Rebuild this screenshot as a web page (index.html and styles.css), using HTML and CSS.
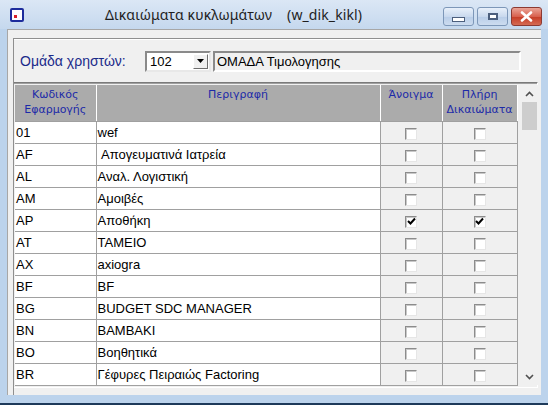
FILE: index.html
```html
<!DOCTYPE html>
<html lang="el">
<head>
    <meta charset="UTF-8">
    <title>Δικαιώματα κυκλωμάτων</title>
    <link rel="stylesheet" href="styles.css">
</head>
<body>
    <div class="window">
        <div class="titlebar">
            <span class="app-icon"><span class="dot"></span></span>
            <span class="title">Δικαιώματα κυκλωμάτων&nbsp;&nbsp;&nbsp;&nbsp;(w_dik_kikl)</span>
            <div class="caption-buttons">
                <span class="cap-btn"><span class="min-glyph"></span></span>
                <span class="cap-btn"><span class="max-glyph"></span></span>
                <span class="cap-btn close">
                    <svg width="13" height="11" viewBox="0 0 13 11"><path d="M2 1.5 L11 9.5 M11 1.5 L2 9.5" stroke="#fff" stroke-width="2.6" stroke-linecap="round"/></svg>
                </span>
            </div>
        </div>

        <div class="client">
            <div class="panel">
                <div class="filter">
                    <span class="label">Ομάδα χρηστών:</span>
                    <div class="combo">
                        <span class="combo-text">102</span>
                        <span class="combo-btn">
                            <svg width="7" height="4" viewBox="0 0 7 4"><path d="M0 0 H7 L3.5 4 Z" fill="#000"/></svg>
                        </span>
                    </div>
                    <div class="textbox">ΟΜΑΔΑ Τιμολογησης</div>
                </div>

                <div class="grid">
                    <table class="rows">
                        <colgroup>
                            <col class="c-code">
                            <col class="c-desc">
                            <col class="c-open">
                            <col class="c-full">
                        </colgroup>
                        <thead>
                            <tr>
                                <th>Κωδικός<br>Εφαρμογής</th>
                                <th>Περιγραφή</th>
                                <th>Άνοιγμα</th>
                                <th>Πλήρη<br>Δικαιώματα</th>
                            </tr>
                        </thead>
                        <tbody>
                            <tr><td>01</td><td>wef</td><td class="chk"><span class="box"></span></td><td class="chk"><span class="box"></span></td></tr>
                            <tr><td>AF</td><td>&nbsp;Απογευματινά Ιατρεία</td><td class="chk"><span class="box"></span></td><td class="chk"><span class="box"></span></td></tr>
                            <tr><td>AL</td><td>Αναλ. Λογιστική</td><td class="chk"><span class="box"></span></td><td class="chk"><span class="box"></span></td></tr>
                            <tr><td>AM</td><td>Αμοιβές</td><td class="chk"><span class="box"></span></td><td class="chk"><span class="box"></span></td></tr>
                            <tr><td>AP</td><td>Αποθήκη</td>
                                <td class="chk"><span class="box"><svg width="9" height="9" viewBox="0 0 9 9"><path d="M1 4 L3.5 6.5 L8 1.5" fill="none" stroke="#000" stroke-width="2"/></svg></span></td>
                                <td class="chk"><span class="box"><svg width="9" height="9" viewBox="0 0 9 9"><path d="M1 4 L3.5 6.5 L8 1.5" fill="none" stroke="#000" stroke-width="2"/></svg></span></td></tr>
                            <tr><td>AT</td><td>ΤΑΜΕΙΟ</td><td class="chk"><span class="box"></span></td><td class="chk"><span class="box"></span></td></tr>
                            <tr><td>AX</td><td>axiogra</td><td class="chk"><span class="box"></span></td><td class="chk"><span class="box"></span></td></tr>
                            <tr><td>BF</td><td>BF</td><td class="chk"><span class="box"></span></td><td class="chk"><span class="box"></span></td></tr>
                            <tr><td>BG</td><td>BUDGET SDC MANAGER</td><td class="chk"><span class="box"></span></td><td class="chk"><span class="box"></span></td></tr>
                            <tr><td>BN</td><td>BAMBAKI</td><td class="chk"><span class="box"></span></td><td class="chk"><span class="box"></span></td></tr>
                            <tr><td>BO</td><td>Βοηθητικά</td><td class="chk"><span class="box"></span></td><td class="chk"><span class="box"></span></td></tr>
                            <tr><td>BR</td><td>Γέφυρες Πειραιώς Factoring</td><td class="chk"><span class="box"></span></td><td class="chk"><span class="box"></span></td></tr>
                        </tbody>
                    </table>

                    <div class="scrollbar">
                        <span class="arrow">
                            <svg width="9" height="6" viewBox="0 0 9 6"><path d="M1 5 L4.5 1.5 L8 5" fill="none" stroke="#505050" stroke-width="1.6"/></svg>
                        </span>
                        <span class="thumb"></span>
                        <span class="track"></span>
                        <span class="arrow">
                            <svg width="9" height="6" viewBox="0 0 9 6"><path d="M1 1 L4.5 4.5 L8 1" fill="none" stroke="#505050" stroke-width="1.6"/></svg>
                        </span>
                    </div>
                </div>
            </div>
        </div>
    </div>
</body>
</html>
```

FILE: styles.css
```css
body {
    margin: 0;
    padding: 0;
    font-family: "Liberation Sans", Arial, sans-serif;
    background-color: #ffffff;
}

.window {
    width: 548px;
    height: 405px;
    box-sizing: border-box;
    background-color: #bcd3ec;
    border-bottom: 2px solid #1e3a5a;
    display: flex;
    flex-direction: column;
}

/* title bar */
.titlebar {
    height: 29px;
    flex: none;
    display: flex;
    align-items: center;
    background: linear-gradient(#dbe7f5, #c5d8ee);
}

.app-icon {
    width: 10px;
    height: 10px;
    margin-left: 10px;
    border: 2px solid #1d2c9c;
    border-radius: 2px;
    background-color: #ffffff;
    position: relative;
}

.app-icon .dot {
    position: absolute;
    left: 2px;
    top: 5px;
    width: 3px;
    height: 3px;
    background-color: #d8202a;
}

.title {
    margin-left: 81px;
    font-family: "Noto Sans", sans-serif;
    font-size: 14px;
    color: #1e1e1e;
    letter-spacing: 0.1px;
}

.caption-buttons {
    margin-left: auto;
    margin-right: 6px;
    display: flex;
    gap: 3px;
    align-self: flex-start;
    margin-top: 7px;
}

.cap-btn {
    width: 29px;
    height: 17px;
    border: 1px solid #7d97b8;
    border-radius: 3px;
    background: linear-gradient(#e8f0fa, #c9d9ee 50%, #b8cde8 51%, #cddcef);
    display: flex;
    align-items: center;
    justify-content: center;
}

.cap-btn.close {
    border-color: #8c3a32;
    background: linear-gradient(#eaa497, #d8614e 50%, #c63b25 51%, #d46a52);
}

.min-glyph {
    width: 11px;
    height: 3px;
    margin-top: 5px;
    background-color: #ffffff;
    border: 1px solid #4c5f7d;
}

.max-glyph {
    width: 8px;
    height: 5px;
    background-color: #ffffff;
    border: 1px solid #4c5f7d;
    box-shadow: inset 0 0 0 1px #4c5f7d;
}

/* client area */
.client {
    flex: 1;
    margin: 0 7px 8px 7px;
    background-color: #f0f0f0;
    border-top: 1px solid #a7a7a7;
    border-left: 1px solid #a7a7a7;
    padding: 8px 0 0 5px;
    display: flex;
}

.panel {
    flex: 1;
    border-top: 1px solid #8f8f8f;
    border-left: 1px solid #8f8f8f;
    display: flex;
    flex-direction: column;
}

.filter {
    height: 42px;
    display: flex;
    align-items: center;
    border-top: 1px solid #ffffff;
}

.label {
    margin-left: 6px;
    font-size: 14px;
    color: #1a2a8a;
    width: 125px;
}

.combo {
    width: 62px;
    height: 17px;
    border: 2px solid;
    border-color: #8a8a8a #e8e8e8 #e8e8e8 #8a8a8a;
    background-color: #ffffff;
    display: flex;
    align-items: center;
}

.combo-text {
    flex: 1;
    padding-left: 3px;
    font-size: 13px;
}

.combo-btn {
    width: 15px;
    height: 15px;
    margin-right: 1px;
    background-color: #f0f0f0;
    border: 1px solid;
    border-color: #ffffff #6e6e6e #6e6e6e #ffffff;
    box-sizing: border-box;
    display: flex;
    align-items: center;
    justify-content: center;
}

.textbox {
    width: 302px;
    height: 17px;
    margin-left: 2px;
    border: 2px solid;
    border-color: #8a8a8a #ffffff #ffffff #8a8a8a;
    background-color: #f0f0f0;
    font-size: 13px;
    line-height: 17px;
    padding-left: 2px;
}

/* grid */
.grid {
    display: flex;
    width: 524px;
    height: 306px;
    border-top: 1px solid #7a7a7a;
    border-right: 1px solid #ffffff;
    border-bottom: 1px solid #ffffff;
    box-shadow: inset 0 1px 0 #a0a0a0;
    background-color: #f0f0f0;
    padding: 2px 0 0 1px;
    box-sizing: border-box;
}

.rows {
    border-collapse: collapse;
    table-layout: fixed;
    width: 502px;
    align-self: flex-start;
}

.c-code { width: 81px; }
.c-desc { width: 284px; }
.c-open { width: 62px; }
.c-full { width: 75px; }

.rows th {
    height: 34px;
    padding: 2px 0 0 0;
    background-color: #ababab;
    color: #1c2aa8;
    font-family: "DejaVu Sans", sans-serif;
    font-size: 11px;
    font-weight: normal;
    line-height: 15px;
    text-align: center;
    vertical-align: top;
    border-right: 1px solid #ffffff;
    border-bottom: 1px solid #a0a0a0;
    white-space: nowrap;
}

.rows td {
    height: 21px;
    padding: 0 0 0 1px;
    font-size: 13px;
    color: #000000;
    background-color: #ffffff;
    border-right: 1px solid #a0a0a0;
    border-bottom: 1px solid #a0a0a0;
    white-space: nowrap;
    overflow: hidden;
}

.rows td.chk {
    background-color: #f0f0f0;
    text-align: center;
    padding: 0;
}

.box {
    display: inline-flex;
    align-items: center;
    justify-content: center;
    width: 10px;
    height: 10px;
    vertical-align: middle;
    background-color: #ffffff;
    border: 1px solid;
    border-color: #8c8c8c #e6e6e6 #e6e6e6 #8c8c8c;
    box-shadow: inset 1px 1px 0 #c8c8c8;
}

.scrollbar {
    width: 17px;
    margin-left: 3px;
    height: 300px;
    display: flex;
    flex-direction: column;
    align-items: center;
    background-color: #f0f0f0;
}

.arrow {
    height: 17px;
    width: 17px;
    display: flex;
    align-items: center;
    justify-content: center;
    flex: none;
}

.thumb {
    width: 15px;
    height: 28px;
    background-color: #cdcdcd;
    flex: none;
}

.track {
    flex: 1;
}
```
